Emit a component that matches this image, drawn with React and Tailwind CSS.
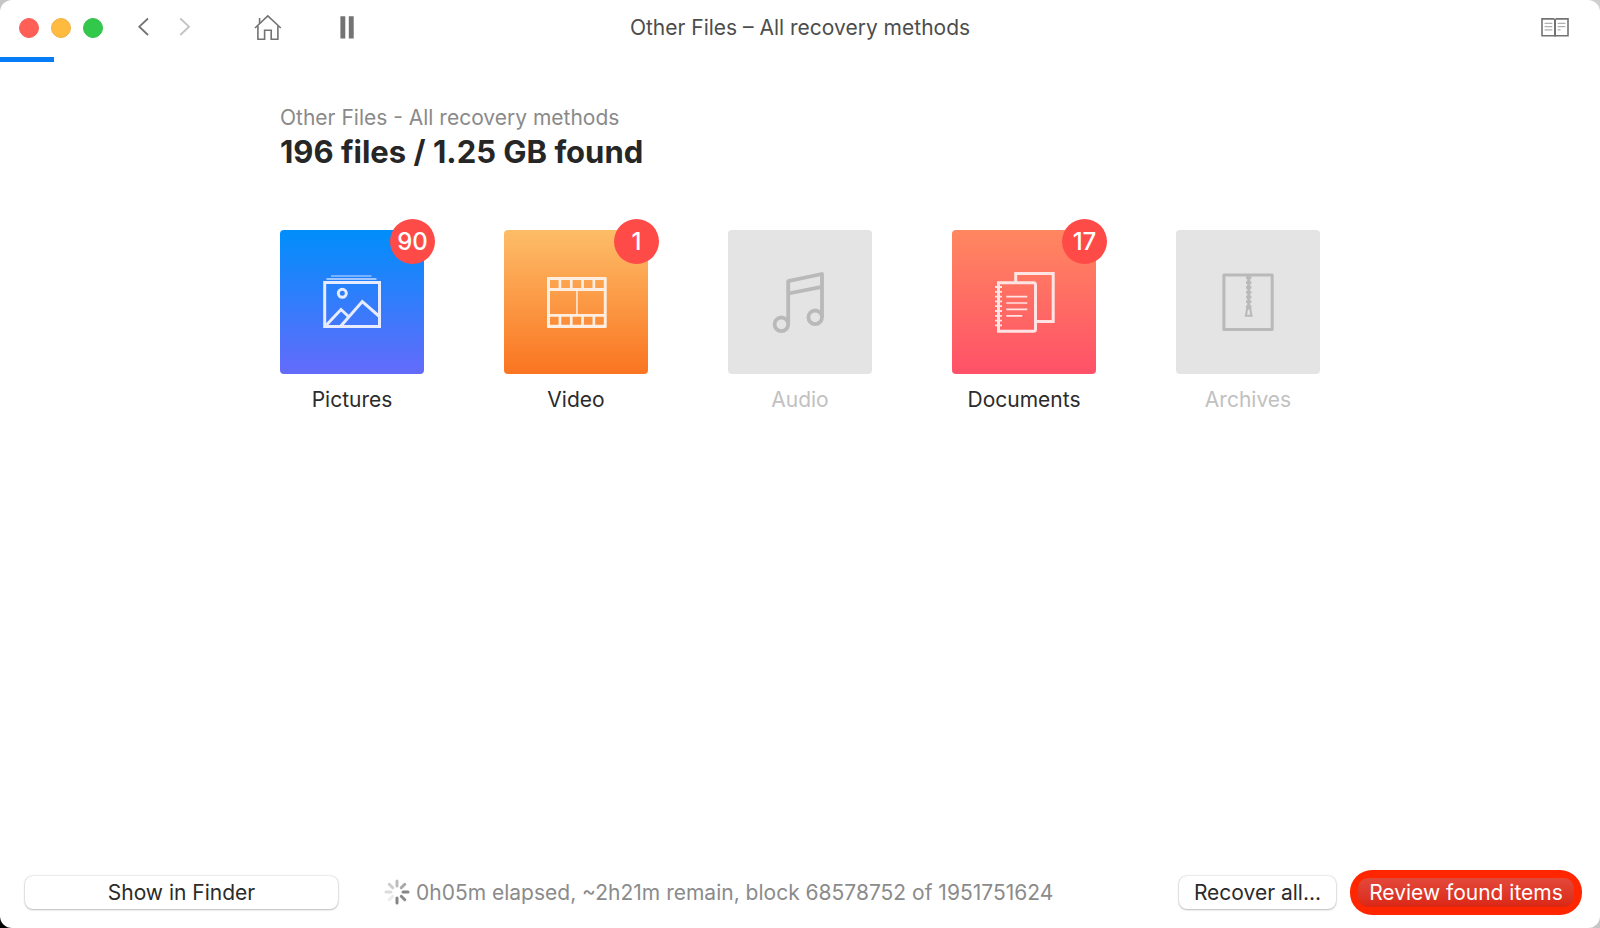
import React from 'react';

const PicturesIcon = () => (
    <g fill="none" stroke="currentColor" strokeWidth="3">
        <path d="M51 46H91.5" strokeWidth="1.6" opacity="0.6" />
        <path d="M46.5 49H96.5" strokeWidth="1.6" opacity="0.85" />
        <rect x="44.7" y="52.5" width="54.8" height="44" />
        <circle cx="62.3" cy="63.3" r="4" />
        <path d="M60 97L82.3 71.5L100 87" />
        <path d="M45 96.5L61 79.5L68.5 86.5" />
    </g>
);

const VideoIcon = () => (
    <path
        fill="currentColor"
        fillRule="evenodd"
        d="M44 47H101.7a1 1 0 0 1 1 1V97a1 1 0 0 1 -1 1H44a1 1 0 0 1 -1 -1V48a1 1 0 0 1 1 -1Z
           M46 50h8.6v8h-8.6Z M57.3 50h8.6v8h-8.6Z M68.6 50h8.6v8h-8.6Z M79.9 50h8.6v8h-8.6Z M91.2 50h8.6v8h-8.6Z
           M46 86.8h8.6v8h-8.6Z M57.3 86.8h8.6v8h-8.6Z M68.6 86.8h8.6v8h-8.6Z M79.9 86.8h8.6v8h-8.6Z M91.2 86.8h8.6v8h-8.6Z
           M46 61H72.2V84H46Z M73.7 61H99.8V84H73.7Z"
    />
);

const AudioIcon = () => (
    <g fill="none" stroke="currentColor" strokeWidth="3.8" strokeLinejoin="round">
        <path d="M60.2 94V51.2L94 44V87" />
        <path d="M60.2 63.5L94 56.8" />
        <circle cx="53.4" cy="94.3" r="6.8" />
        <circle cx="87.2" cy="87.3" r="6.8" />
    </g>
);

const DocumentsIcon = () => (
    <g fill="none" stroke="currentColor" strokeWidth="3">
        <path d="M63.7 52V43.5H101.2V91.5H85" />
        <path d="M46.5 52.8H81.5a2 2 0 0 1 2 2V99.3a2 2 0 0 1 -2 2H46.5Z" />
        <path d="M54.3 66.7H75.3M54.3 73H75.3M54.3 79.4H75.3M54.3 85.9H70.3" strokeWidth="1.7" />
        <path
            d="M43 57H50M43 61.8H50M43 66.6H50M43 71.4H50M43 76.2H50M43 81H50M43 85.8H50M43 90.6H50M43 95.4H50"
            strokeWidth="1.8"
        />
    </g>
);

const ArchivesIcon = () => (
    <g fill="none" stroke="currentColor" strokeWidth="3">
        <rect x="47.9" y="45" width="48.3" height="54.5" strokeLinejoin="round" />
        <path d="M72.7 46V78" strokeWidth="3" />
        <path d="M72.7 46.5V78" strokeWidth="5.4" strokeDasharray="2.6 2.2" />
        <path d="M71.2 78.5H74.2L75.5 85.8H69.9Z" strokeWidth="2" />
    </g>
);

const categories = [
    { name: 'Pictures', count: 90, icon: PicturesIcon, tile: 'bg-linear-to-b/srgb from-[#008efb] to-[#646bfb] text-[#e6ebff]' },
    { name: 'Video', count: 1, icon: VideoIcon, tile: 'bg-linear-to-b/srgb from-[#fdbd68] to-[#fa7521] text-[#feeee1]' },
    { name: 'Audio', count: 0, icon: AudioIcon, tile: 'bg-[#e4e4e4] text-[#b9b9b9]' },
    { name: 'Documents', count: 17, icon: DocumentsIcon, tile: 'bg-linear-to-b/srgb from-[#ff8760] to-[#ff5168] text-[#ffe4e3]' },
    { name: 'Archives', count: 0, icon: ArchivesIcon, tile: 'bg-[#e4e4e4] text-[#b9b9b9]' },
];

const CategoryTile = ({ name, count, icon: Icon, tile }) => (
    <button type="button" disabled={count === 0} className="flex w-36 flex-col items-center gap-3">
        <span className={`relative block size-36 rounded-[4px] ${tile}`}>
            <svg viewBox="0 0 144 144" className="size-36" aria-hidden="true">
                <Icon />
            </svg>
            {count > 0 && (
                <span className="absolute -top-[11px] -right-[11px] flex h-[45px] min-w-[45px] items-center justify-center rounded-full bg-[#ff4b48] px-[7px] text-2xl font-medium text-white">
                    {count}
                </span>
            )}
        </span>
        <span className={`text-[21px] leading-7 ${count > 0 ? 'text-[#2b2b2b]' : 'text-[#c1c1c1]'}`}>{name}</span>
    </button>
);

const spokes = [
    [0, '#bdbdbd'],
    [45, '#a8a8a8'],
    [90, '#858585'],
    [135, '#8a8a8a'],
    [180, '#858585'],
    [225, '#ececec'],
    [270, '#dcdcdc'],
    [315, '#cccccc'],
];

const Spinner = () => (
    <svg viewBox="0 0 26 26" className="size-[26px] shrink-0" aria-hidden="true">
        {spokes.map(([angle, color]) => (
            <path key={angle} d="M13 2V7" stroke={color} strokeWidth="3" strokeLinecap="round" transform={`rotate(${angle} 13 13)`} />
        ))}
    </svg>
);

const TitleBar = () => (
    <header className="grid h-14 grid-cols-[1fr_auto_1fr] items-center text-[#737373]">
        <div className="flex h-14 items-center pl-[19px]">
            <div className="flex gap-3">
                <button type="button" aria-label="Close" className="size-5 rounded-full border border-[#f2635b] bg-[#ff5f57]" />
                <button type="button" aria-label="Minimize" className="size-5 rounded-full border border-[#f0b145] bg-[#ffbb3f]" />
                <button type="button" aria-label="Zoom" className="size-5 rounded-full border border-[#38bf4e] bg-[#32c84b]" />
            </div>
            <div className="ml-8 flex gap-5">
                <button type="button" aria-label="Back">
                    <svg viewBox="0 0 22 22" className="size-[22px]" fill="none" stroke="currentColor" strokeWidth="1.8">
                        <path d="M13 1.5L4.3 9.7L13 18" />
                    </svg>
                </button>
                <button type="button" aria-label="Forward" disabled className="text-[#c2c2c2]">
                    <svg viewBox="0 0 22 22" className="size-[22px]" fill="none" stroke="currentColor" strokeWidth="1.8">
                        <path d="M3.3 1.5L12 9.7L3.3 18" />
                    </svg>
                </button>
            </div>
            <button type="button" aria-label="Home" className="ml-[55px]">
                <svg viewBox="0 0 28 28" className="size-7" fill="none" stroke="currentColor" strokeWidth="1.6">
                    <path d="M1 14L13.8 1.9L26.8 14" />
                    <path d="M3.9 12V25.3H10.6V16.2H17.2V25.3H23.9V12" />
                    <path d="M5.6 9.5V4" />
                </svg>
            </button>
            <button type="button" aria-label="Pause" className="ml-[58px]">
                <svg viewBox="0 0 14 24" className="h-6 w-3.5" fill="currentColor">
                    <path d="M0.4 0.2H5.3V22.4H0.4ZM8.8 0.2H13.7V22.4H8.8Z" />
                </svg>
            </button>
        </div>
        <h1 className="text-[21px] leading-7 text-[#4d4d4d]">Other Files – All recovery methods</h1>
        <button type="button" aria-label="User guide" className="mr-[31px] justify-self-end">
            <svg viewBox="0 0 28 20" className="h-5 w-7" fill="none" stroke="currentColor">
                <path d="M1 0.9H12.5L14 1.9L15.5 0.9H27V17.8H1Z" strokeWidth="1.6" />
                <path d="M14 1.5V18.5" strokeWidth="2" />
                <path d="M3.6 5.4H11.3M3.6 8.6H11.3M3.6 11.8H11.3M16.7 5.4H24.4M16.7 8.6H24.4M16.7 11.8H19.6" stroke="#b0b0b0" strokeWidth="1.3" />
            </svg>
        </button>
    </header>
);

const FooterBar = () => (
    <footer className="flex items-center pr-[18px] pb-[13px] pl-[25px] text-[21px] leading-7 text-[#2b2b2b]">
        <button type="button" className="h-[33px] w-[313px] rounded-lg bg-white shadow-[0_0_2px_rgba(0,0,0,0.25),0_1px_2px_rgba(0,0,0,0.2)]">
            Show in Finder
        </button>
        <div className="ml-[46px] flex items-start gap-[6px] text-[#8b8b8b]" role="status">
            <Spinner />
            <span>0h05m elapsed, ~2h21m remain, block 68578752 of 1951751624</span>
        </div>
        <button type="button" className="ml-auto h-[33px] w-[157px] rounded-lg bg-white shadow-[0_0_2px_rgba(0,0,0,0.25),0_1px_2px_rgba(0,0,0,0.2)]">
            Recover all...
        </button>
        <div className="ml-[14px] rounded-[22px] bg-[#ff2600] p-2">
            <button type="button" className="block h-[29px] w-[216px] rounded-[10px] bg-linear-to-b from-[#e3483a] to-[#db2613] text-white">
                Review found items
            </button>
        </div>
    </footer>
);

export default function App() {
    return (
        <div className="min-h-screen bg-[linear-gradient(to_top_right,#000_0,#111_12px,#bdbdbd_24px,#cfcfcf)] font-[Inter,sans-serif]">
            <div className="flex min-h-screen flex-col rounded-[12px] bg-white">
                <TitleBar />
                <div role="progressbar" aria-label="Scan progress" aria-valuenow={3} className="mt-px h-[5px]">
                    <div className="h-[5px] w-[54px] bg-[#067df7]" />
                </div>

                <main className="mx-auto w-full max-w-[1040px] flex-1 pt-[42px]">
                    <p className="text-[21px] leading-7 text-[#8a8a8a]">Other Files - All recovery methods</p>
                    <h2 className="text-[31px] leading-10 font-bold text-[#262626]">196 files / 1.25 GB found</h2>
                    <div className="mt-[58px] flex justify-between">
                        {categories.map((category) => (
                            <CategoryTile key={category.name} {...category} />
                        ))}
                    </div>
                </main>

                <FooterBar />
            </div>
        </div>
    );
}
